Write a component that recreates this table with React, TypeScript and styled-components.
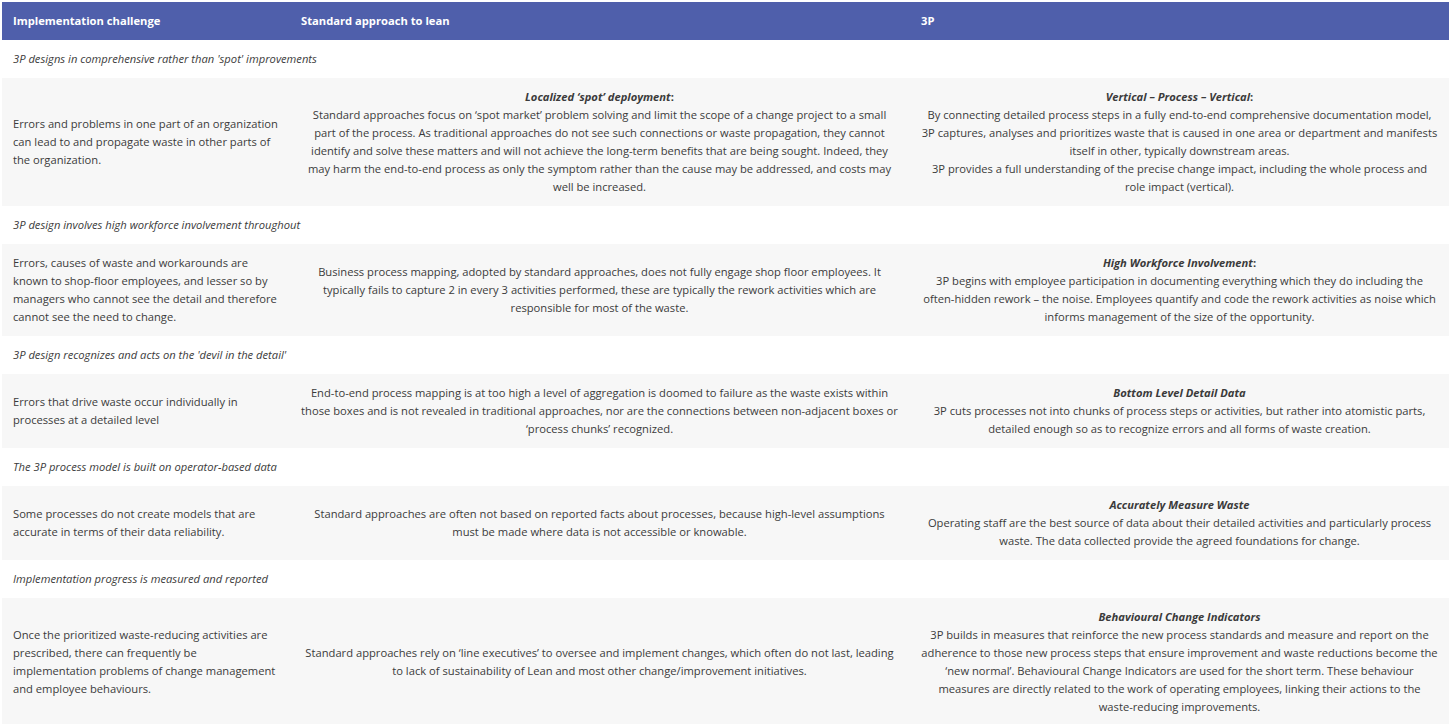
import styled, { createGlobalStyle } from "styled-components";

const GlobalStyle = createGlobalStyle`
  html, body {
    margin: 0;
    padding: 0;
    background: #ffffff;
  }
  body {
    padding: 2px 0 0 2px;
    font-family: "Open Sans", "Liberation Sans", sans-serif;
    overflow: hidden;
  }
`;

const Table = styled.table`
  width: 1447px;
  border-collapse: collapse;
  border-spacing: 0;
  table-layout: fixed;
  font-size: 11.2px;
  line-height: 18px;
  color: #3b3b3b;
`;

const Col = styled.col<{ $width?: number }>`
  width: ${(p) => (p.$width ? `${p.$width}px` : "auto")};
`;

const HeadCell = styled.th`
  box-sizing: border-box;
  background-color: #4f5fab;
  color: #ffffff;
  font-weight: 700;
  text-align: left;
  padding: 10px 11px;
`;

const SectionRow = styled.tr`
  background-color: #ffffff;
`;

const SectionCell = styled.td`
  padding: 10px 11px;
  font-style: italic;
`;

const DataRow = styled.tr`
  background-color: #f7f7f7;
`;

const Cell = styled.td<{ $center?: boolean; $padRight?: number }>`
  box-sizing: border-box;
  padding: 10px ${(p) => p.$padRight ?? 11}px 10px 11px;
  vertical-align: middle;
  text-align: ${(p) => (p.$center ? "center" : "left")};
`;

const Title = styled.strong`
  display: block;
  font-weight: 700;

  em {
    font-style: italic;
  }
`;

type Row = {
  section: string;
  challenge: string;
  standardTitle?: string;
  standardColon?: boolean;
  standard: string[];
  threePTitle: string;
  threePColon?: boolean;
  threeP: string[];
};

const rows: Row[] = [
  {
    section: "3P designs in comprehensive rather than 'spot' improvements",
    challenge:
      "Errors and problems in one part of an organization can lead to and propagate waste in other parts of the organization.",
    standardTitle: "Localized \u2018spot\u2019 deployment",
    standardColon: true,
    standard: [
      "Standard approaches focus on \u2018spot market\u2019 problem solving and limit the scope of a change project to a small part of the process. As traditional approaches do not see such connections or waste propagation, they cannot identify and solve these matters and will not achieve the long-term benefits that are being sought. Indeed, they may harm the end-to-end process as only the symptom rather than the cause may be addressed, and costs may well be increased.",
    ],
    threePTitle: "Vertical \u2013 Process \u2013 Vertical",
    threePColon: true,
    threeP: [
      "By connecting detailed process steps in a fully end-to-end comprehensive documentation model, 3P captures, analyses and prioritizes waste that is caused in one area or department and manifests itself in other, typically downstream areas.",
      "3P provides a full understanding of the precise change impact, including the whole process and role impact (vertical).",
    ],
  },
  {
    section: "3P design involves high workforce involvement throughout",
    challenge:
      "Errors, causes of waste and workarounds are known to shop-floor employees, and lesser so by managers who cannot see the detail and therefore cannot see the need to change.",
    standard: [
      "Business process mapping, adopted by standard approaches, does not fully engage shop floor employees. It typically fails to capture 2 in every 3 activities performed, these are typically the rework activities which are responsible for most of the waste.",
    ],
    threePTitle: "High Workforce Involvement",
    threePColon: true,
    threeP: [
      "3P begins with employee participation in documenting everything which they do including the often-hidden rework \u2013 the noise. Employees quantify and code the rework activities as noise which informs management of the size of the opportunity.",
    ],
  },
  {
    section: "3P design recognizes and acts on the 'devil in the detail'",
    challenge:
      "Errors that drive waste occur individually in processes at a detailed level",
    standard: [
      "End-to-end process mapping is at too high a level of aggregation is doomed to failure as the waste exists within those boxes and is not revealed in traditional approaches, nor are the connections between non-adjacent boxes or \u2018process chunks\u2019 recognized.",
    ],
    threePTitle: "Bottom Level Detail Data",
    threeP: [
      "3P cuts processes not into chunks of process steps or activities, but rather into atomistic parts, detailed enough so as to recognize errors and all forms of waste creation.",
    ],
  },
  {
    section: "The 3P process model is built on operator-based data",
    challenge:
      "Some processes do not create models that are accurate in terms of their data reliability.",
    standard: [
      "Standard approaches are often not based on reported facts about processes, because high-level assumptions must be made where data is not accessible or knowable.",
    ],
    threePTitle: "Accurately Measure Waste",
    threeP: [
      "Operating staff are the best source of data about their detailed activities and particularly process waste. The data collected provide the agreed foundations for change.",
    ],
  },
  {
    section: "Implementation progress is measured and reported",
    challenge:
      "Once the prioritized waste-reducing activities are prescribed, there can frequently be implementation problems of change management and employee behaviours.",
    standard: [
      "Standard approaches rely on \u2018line executives\u2019 to oversee and implement changes, which often do not last, leading to lack of sustainability of Lean and most other change/improvement initiatives.",
    ],
    threePTitle: "Behavioural Change Indicators",
    threeP: [
      "3P builds in measures that reinforce the new process standards and measure and report on the adherence to those new process steps that ensure improvement and waste reductions become the \u2018new normal\u2019. Behavioural Change Indicators are used for the short term. These behaviour measures are directly related to the work of operating employees, linking their actions to the waste-reducing improvements.",
    ],
  },
];

const Paragraphs = ({ lines }: { lines: string[] }) => (
  <>
    {lines.map((line, i) => (
      <div key={i}>{line}</div>
    ))}
  </>
);

const App = () => {
  return (
    <>
      <GlobalStyle />
      <Table>
        <colgroup>
          <Col $width={288} />
          <Col $width={620} />
          <Col />
        </colgroup>
        <thead>
          <tr>
            <HeadCell>Implementation challenge</HeadCell>
            <HeadCell>Standard approach to lean</HeadCell>
            <HeadCell>3P</HeadCell>
          </tr>
        </thead>
        <tbody>
          {rows.map((row) => (
            <>
              <SectionRow key={row.section}>
                <SectionCell colSpan={3}>{row.section}</SectionCell>
              </SectionRow>
              <DataRow key={row.section + "-data"}>
                <Cell>{row.challenge}</Cell>
                <Cell $center $padRight={12}>
                  {row.standardTitle && (
                    <Title>
                      <em>{row.standardTitle}</em>
                      {row.standardColon && ":"}
                    </Title>
                  )}
                  <Paragraphs lines={row.standard} />
                </Cell>
                <Cell $center>
                  <Title>
                    <em>{row.threePTitle}</em>
                    {row.threePColon && ":"}
                  </Title>
                  <Paragraphs lines={row.threeP} />
                </Cell>
              </DataRow>
            </>
          ))}
        </tbody>
      </Table>
    </>
  );
};

export default App;
